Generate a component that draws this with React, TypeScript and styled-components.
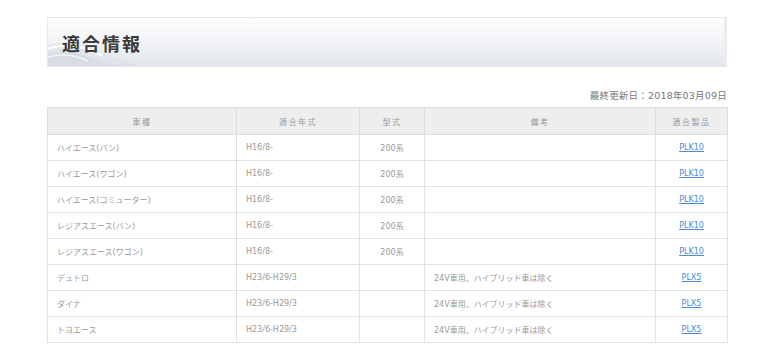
import React from 'react'
import styled, { createGlobalStyle } from 'styled-components'

interface Fitment {
  model: string
  years: string
  type: string
  note: string
  product: string
}

const rows: Fitment[] = [
  { model: 'ハイエース(バン)', years: 'H16/8-', type: '200系', note: '', product: 'PLK10' },
  { model: 'ハイエース(ワゴン)', years: 'H16/8-', type: '200系', note: '', product: 'PLK10' },
  { model: 'ハイエース(コミューター)', years: 'H16/8-', type: '200系', note: '', product: 'PLK10' },
  { model: 'レジアスエース(バン)', years: 'H16/8-', type: '200系', note: '', product: 'PLK10' },
  { model: 'レジアスエース(ワゴン)', years: 'H16/8-', type: '200系', note: '', product: 'PLK10' },
  { model: 'デュトロ', years: 'H23/6-H29/3', type: '', note: '24V車用、ハイブリッド車は除く', product: 'PLX5' },
  { model: 'ダイナ', years: 'H23/6-H29/3', type: '', note: '24V車用、ハイブリッド車は除く', product: 'PLX5' },
  { model: 'トヨエース', years: 'H23/6-H29/3', type: '', note: '24V車用、ハイブリッド車は除く', product: 'PLX5' }
]

const App: React.FC = () => {
  return (
    <Page>
      <GlobalStyle />
      <TitleBox>
        <Wave viewBox="0 0 120 50" preserveAspectRatio="none">
          <path
            d="M0 28 C 18 22, 34 26, 50 34 C 64 41, 76 45, 92 50 L 0 50 Z"
            fill="#dde1e8"
            opacity="0.6"
          />
          <path
            d="M0 38 C 16 32, 30 35, 44 42 C 54 46, 62 49, 70 50 L 0 50 Z"
            fill="#d2d7df"
            opacity="0.6"
          />
          <path
            d="M0 32 C 20 25, 36 29, 54 39"
            stroke="#ffffff"
            strokeWidth="2.5"
            fill="none"
            opacity="0.9"
          />
          <path
            d="M0 41 C 14 36, 26 38, 40 45"
            stroke="#ffffff"
            strokeWidth="1.5"
            fill="none"
            opacity="0.8"
          />
        </Wave>
        <Title>適合情報</Title>
      </TitleBox>
      <Updated>最終更新日：2018年03月09日</Updated>
      <Table>
        <colgroup>
          <col style={{ width: 189 }} />
          <col style={{ width: 123 }} />
          <col style={{ width: 65 }} />
          <col style={{ width: 231 }} />
          <col style={{ width: 72 }} />
        </colgroup>
        <thead>
          <tr>
            <Th>車種</Th>
            <Th>適合年式</Th>
            <Th>型式</Th>
            <Th>備考</Th>
            <Th>適合製品</Th>
          </tr>
        </thead>
        <tbody>
          {rows.map((row, i) => (
            <tr key={i}>
              <Td>{row.model}</Td>
              <Td>{row.years}</Td>
              <Td center>{row.type}</Td>
              <Td>{row.note}</Td>
              <Td center>
                <ProductLink href="#">{row.product}</ProductLink>
              </Td>
            </tr>
          ))}
        </tbody>
      </Table>
    </Page>
  )
}

export default App

const GlobalStyle = createGlobalStyle`
  body {
    margin: 0;
    background: #ffffff;
    font-family: "DejaVu Sans", "Noto Sans CJK JP", sans-serif;
  }
`

const Page = styled.div`
  width: 680px;
  padding: 17px 0 0 47px;
`

const TitleBox = styled.div`
  position: relative;
  height: 48px;
  border: 1px solid #e6e8eb;
  box-shadow: inset -3px 0 2px -1px #eceef1;
  background: linear-gradient(to bottom, #fdfdfe 0%, #f1f3f6 50%, #e1e5eb 100%);
  display: flex;
  align-items: center;
  padding-left: 14px;
  overflow: hidden;
`

const Wave = styled.svg`
  position: absolute;
  left: 0;
  top: 0;
  width: 120px;
  height: 100%;
`

const Title = styled.h2`
  position: relative;
  margin: 2px 0 0;
  font-family: "Noto Sans CJK JP", sans-serif;
  font-size: 18px;
  font-weight: bold;
  letter-spacing: 2px;
  color: #3a3a3a;
`

const Updated = styled.p`
  margin: 22px 0 0;
  text-align: right;
  font-size: 9.5px;
  line-height: 14px;
  letter-spacing: 0.2px;
  color: #777;
`

const Table = styled.table`
  width: 680px;
  margin-top: 4px;
  border-collapse: collapse;
  table-layout: fixed;
  font-size: 8px;
  color: #999;
`

const Th = styled.th`
  height: 26px;
  padding: 0;
  background: #eeeeee;
  border: 1px solid #dddddd;
  font-weight: normal;
  letter-spacing: 1.5px;
  text-align: center;
  color: #999;
`

const Td = styled.td<{ center?: boolean }>`
  height: 25px;
  padding: 0 9px;
  border: 1px solid #e2e2e2;
  text-align: ${({ center }) => (center ? 'center' : 'left')};
  white-space: nowrap;
`

const ProductLink = styled.a`
  color: #4a8ad6;
  text-decoration: underline;
  font-size: 8px;
`
